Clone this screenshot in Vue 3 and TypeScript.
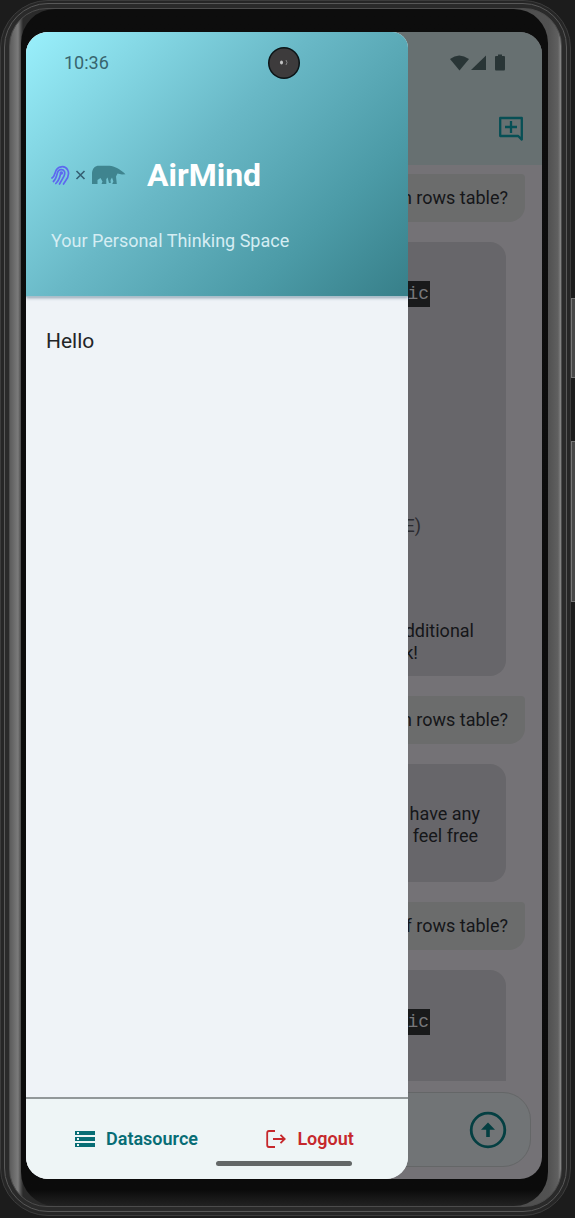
<script setup lang="ts">
interface Line {
  text: string
  code?: boolean
  faint?: boolean
  gap: number
  inset: number
}
interface Message {
  id: number
  from: 'user' | 'bot'
  lines: Line[]
}

const messages: Message[] = [
  { id: 1, from: 'user', lines: [{ text: 'n rows table?', gap: 0, inset: 0 }] },
  {
    id: 2,
    from: 'bot',
    lines: [
      { text: 'ic', code: true, gap: 27, inset: 58 },
      { text: 'E)', faint: true, gap: 208, inset: 67 },
      { text: 'dditional', gap: 83, inset: 14 },
      { text: 'k!', gap: 0, inset: 70 },
    ],
  },
  { id: 3, from: 'user', lines: [{ text: 'n rows table?', gap: 0, inset: 0 }] },
  {
    id: 4,
    from: 'bot',
    lines: [
      { text: 'have any', gap: 27, inset: 8 },
      { text: 'feel free', gap: 0, inset: 10 },
    ],
  },
  { id: 5, from: 'user', lines: [{ text: 'f rows table?', gap: 0, inset: 0 }] },
  { id: 6, from: 'bot', lines: [{ text: 'ic', code: true, gap: 27, inset: 58 }] },
]
</script>

<template>
  <div class="stage">
    <div class="volume"></div>
    <div class="power"></div>
    <div class="shell">
      <div class="groove">
        <div class="metal">
          <div class="bezel">
            <div class="screen">
              <main class="chat">
                <header class="bar">
                  <button class="new-chat" type="button" aria-label="New chat">
                    <svg viewBox="0 0 26 26" width="26" height="26">
                      <path d="M2.200 2h21.600v21.600l-3.600-3.600H2.200z" fill="none" stroke="#074f55" stroke-width="2.300" stroke-linejoin="round" />
                      <path d="M13 5v12M7 11h12" stroke="#074f55" stroke-width="2.300" />
                    </svg>
                  </button>
                </header>
                <section class="messages">
                  <article v-for="m in messages" :key="m.id" class="bubble" :class="m.from">
                    <p
                      v-for="(line, i) in m.lines"
                      :key="i"
                      :class="{ faint: line.faint }"
                      :style="{ marginTop: line.gap + 'px', paddingRight: line.inset + 'px' }"
                    >
                      <code v-if="line.code">{{ line.text }}</code>
                      <template v-else>{{ line.text }}</template>
                    </p>
                  </article>
                </section>
                <form class="composer" @submit.prevent>
                  <input type="text" aria-label="Message" />
                  <button type="submit" aria-label="Send">
                    <svg viewBox="0 0 38 38" width="38" height="38">
                      <circle cx="19" cy="19" r="16.800" fill="none" stroke="#043f42" stroke-width="2.800" />
                      <path d="M19 11.500l7 7.300h-5.200V26h-3.600v-7.200H12z" fill="#043f42" />
                    </svg>
                  </button>
                </form>
              </main>

              <aside class="drawer">
                <header class="hero">
                  <div class="brand">
                    <svg class="logo" viewBox="0 0 76 24" width="76" height="24">
                      <g fill="none" stroke="#5d68ef" stroke-width="1.700" stroke-linecap="round">
                        <path d="M1 15c2.300-1.500 2.800-4 3.600-6.500 1.700-5.500 9.300-6.500 12-1.700 2.300 4.200.2 8.200-2.300 11.500L12.500 21" />
                        <path d="M2.400 18.500c2.800-2.500 3.200-5.500 4-8.600.9-3.700 5.400-4.500 7-1.500 1.300 2.500-.5 5-1.800 7.200L8.500 21" />
                        <path d="M4.800 20.500c2.700-2.500 4-6 4.700-9.500" />
                      </g>
                      <circle cx="10.300" cy="10" r="1.800" fill="#5d68ef" />
                      <path d="M25.500 8l8 8M33.500 8l-8 8" stroke="#355f72" stroke-width="1.600" />
                      <path
                        d="M41 21V11C41 7 43 3.500 46.500 2.800H58.500C61 3 63.500 4 66 5C69 6.500 71.500 8.500 74.500 11.300L71 11.600L66.500 10.500L65 13.500L65.800 21H61.200L62.400 18.500L61 14.500L59.500 17L59.800 20H58L56.600 14.500L55.300 16V21H50.500L51.500 18.500L49.500 15L46.500 17V21Z"
                        fill="#3f848f"
                      />
                    </svg>
                    <h1>AirMind</h1>
                  </div>
                  <p>Your Personal Thinking Space</p>
                </header>
                <div class="history"><a href="#">Hello</a></div>
                <footer class="actions">
                  <button class="source" type="button">
                    <svg viewBox="0 0 20 18" width="20" height="18">
                      <path d="M0 1h20v4H0zM0 7h20v4H0zM0 13h20v4H0z" fill="#076d75" />
                      <path d="M2 2h2v2H2zM2 8h2v2H2zM2 14h2v2H2z" fill="#eef5f6" />
                    </svg>
                    Datasource
                  </button>
                  <button class="logout" type="button">
                    <svg viewBox="0 0 20 18" width="20" height="18" fill="none" stroke="#c6282c" stroke-width="1.800">
                      <path d="M9 1H3Q1.200 1 1.200 3V15Q1.200 17 3 17H9M7 9H18.500M14.500 4.800L18.700 9L14.500 13.200" />
                    </svg>
                    Logout
                  </button>
                </footer>
              </aside>

              <div class="status">
                <time>10:36</time>
                <svg viewBox="0 0 56 18" width="56" height="18" fill="#293536">
                  <path d="M0 5Q9-2 19 5L9.500 16.500Z" />
                  <path d="M36 1.500V16H21Z" />
                  <path d="M45 3Q45 2 46 2h2V.5h4V2h2q1 0 1 1v12q0 1.500-1 1.500h-8q-1 0-1-1.500z" />
                </svg>
              </div>
              <div class="camera">
                <svg viewBox="0 0 32 32" width="32" height="32">
                  <circle cx="16" cy="16" r="16" fill="#0b1416" />
                  <circle cx="16" cy="16" r="14.500" fill="#3d3b3c" />
                  <ellipse cx="13.500" cy="15.500" rx="1.500" ry="2" fill="#c4c4c4" />
                  <path d="M18 13q2 2.500 0 5" fill="none" stroke="#858585" />
                </svg>
              </div>
              <div class="home"></div>
            </div>
          </div>
        </div>
      </div>
    </div>
  </div>
</template>

<style>
body {
  background: #1c1c1c;
}
</style>

<style scoped>
* {
  box-sizing: border-box;
}
h1,
p {
  margin: 0;
}
button {
  border: 0;
  padding: 0;
  background: none;
  font: inherit;
  cursor: pointer;
}
svg {
  display: block;
}
.stage {
  position: relative;
  display: flex;
  min-height: 100vh;
  padding: 0 4px 2px 0;
  background: #1c1c1c;
  font-family: Roboto, "Noto Sans", sans-serif;
  font-size: 18px;
  line-height: 22px;
}
.shell,
.groove,
.metal,
.bezel {
  display: flex;
  flex: 1;
}
.shell {
  padding: 2px 3px 3px;
  border: 1px solid #3c3c3c;
  border-radius: 48px;
  background: #262626;
}
.groove {
  padding: 4px;
  border: 1px solid #585858;
  border-radius: 44px;
  background: #2a2a2a;
}
.metal {
  padding: 0 13px 0 11px;
  border: 1px solid #4c4c4c;
  border-radius: 38px;
  background: linear-gradient(90deg, #5c5c5c, #7b7b7b 8px, #4a4a4a 11px, #2a2a2a 13px, #2a2a2a 50%, #525252 calc(100% - 12px), #606060 calc(100% - 3px), #888);
}
.bezel {
  padding: 23px 6px 27px 5px;
  border-radius: 34px;
  background: linear-gradient(#0d0d0d, #0b0b0b calc(100% - 16px), #222);
}
.screen {
  position: relative;
  display: flex;
  flex: 1;
  overflow: hidden;
  border-radius: 22px;
  background: #747276;
}
.chat {
  display: flex;
  flex: 1;
  flex-direction: column;
  min-width: 0;
}
.bar {
  display: flex;
  align-items: flex-end;
  justify-content: flex-end;
  height: 133px;
  padding: 0 18px 23px;
  background: #677071;
}
.messages {
  display: flex;
  flex: 1 1 0;
  flex-direction: column;
  gap: 20px;
  overflow: hidden;
  padding: 9px 17px 0;
}
.bubble {
  flex: none;
  align-self: flex-end;
  width: 80%;
  text-align: right;
  color: #151619;
}
.user {
  padding: 13px 17px;
  border-radius: 12px 4px 16px 12px;
  background: #6b6c6c;
}
.bot {
  margin-right: 19px;
  padding: 12px 18px;
  border-radius: 16px;
  background: #67666a;
  min-height: 118px;
}
.bot:last-child {
  min-height: 160px;
}
.faint {
  color: #2b2b30;
}
code {
  display: inline-block;
  padding: 2px 1px;
  background: #191a1b;
  color: #77777a;
  font: 18px/22px "Liberation Mono", monospace;
}
.composer {
  display: flex;
  align-items: center;
  height: 75px;
  margin: 11px 11px 12px;
  padding-right: 23px;
  border: 1px solid #646667;
  border-radius: 28px;
  background: #717476;
}
.composer input {
  flex: 1;
  min-width: 0;
  border: 0;
  outline: 0;
  background: transparent;
}
.drawer {
  position: absolute;
  inset: 0 auto 0 0;
  display: flex;
  flex-direction: column;
  width: 74%;
  overflow: hidden;
  border-radius: 0 16px 22px 0;
  background: #eff3f7;
}
.hero {
  height: 265px;
  padding: 122px 25px 0;
  border-bottom: 1px solid #a9bfca;
  background: linear-gradient(135deg, #9af0fc, #69b8c6 45%, #4b9aa6 76%, #377f89);
  box-shadow: 0 1px 3px #8fa0b0;
}
.brand {
  display: flex;
  align-items: center;
  gap: 20px;
}
h1 {
  color: #fff;
  font-size: 32px;
  line-height: 42px;
  font-weight: 700;
}
.hero p {
  margin-top: 34px;
  color: #d5edf3;
  font-size: 18px;
}
.history {
  flex: 1;
  padding: 33px 20px;
}
.history a {
  color: #232527;
  font-size: 21px;
  text-decoration: none;
}
.actions {
  display: flex;
  align-items: center;
  justify-content: space-between;
  height: 82px;
  padding: 0 54px 0 49px;
  border-top: 2px solid #929899;
  background: #eef5f6;
}
.actions button {
  display: flex;
  align-items: center;
  gap: 11px;
  font-size: 18px;
  font-weight: 600;
}
.source {
  color: #076d75;
}
.logout {
  color: #c6282c;
}
.status {
  position: absolute;
  inset: 20px 36px auto 38px;
  display: flex;
  align-items: center;
  justify-content: space-between;
  color: #37656e;
  font-size: 18px;
}
.camera {
  position: absolute;
  top: 15px;
  left: calc(50% - 16px);
}
.home {
  position: absolute;
  bottom: 13px;
  left: calc(50% - 68px);
  width: 136px;
  height: 5px;
  border-radius: 3px;
  background: #646868;
}
.volume,
.power {
  position: absolute;
  right: 0;
  width: 4px;
  border: 1px solid #777;
  border-right: 0;
  background: #484848;
}
.volume {
  top: 298px;
  height: 80px;
}
.power {
  top: 441px;
  height: 161px;
}
</style>
